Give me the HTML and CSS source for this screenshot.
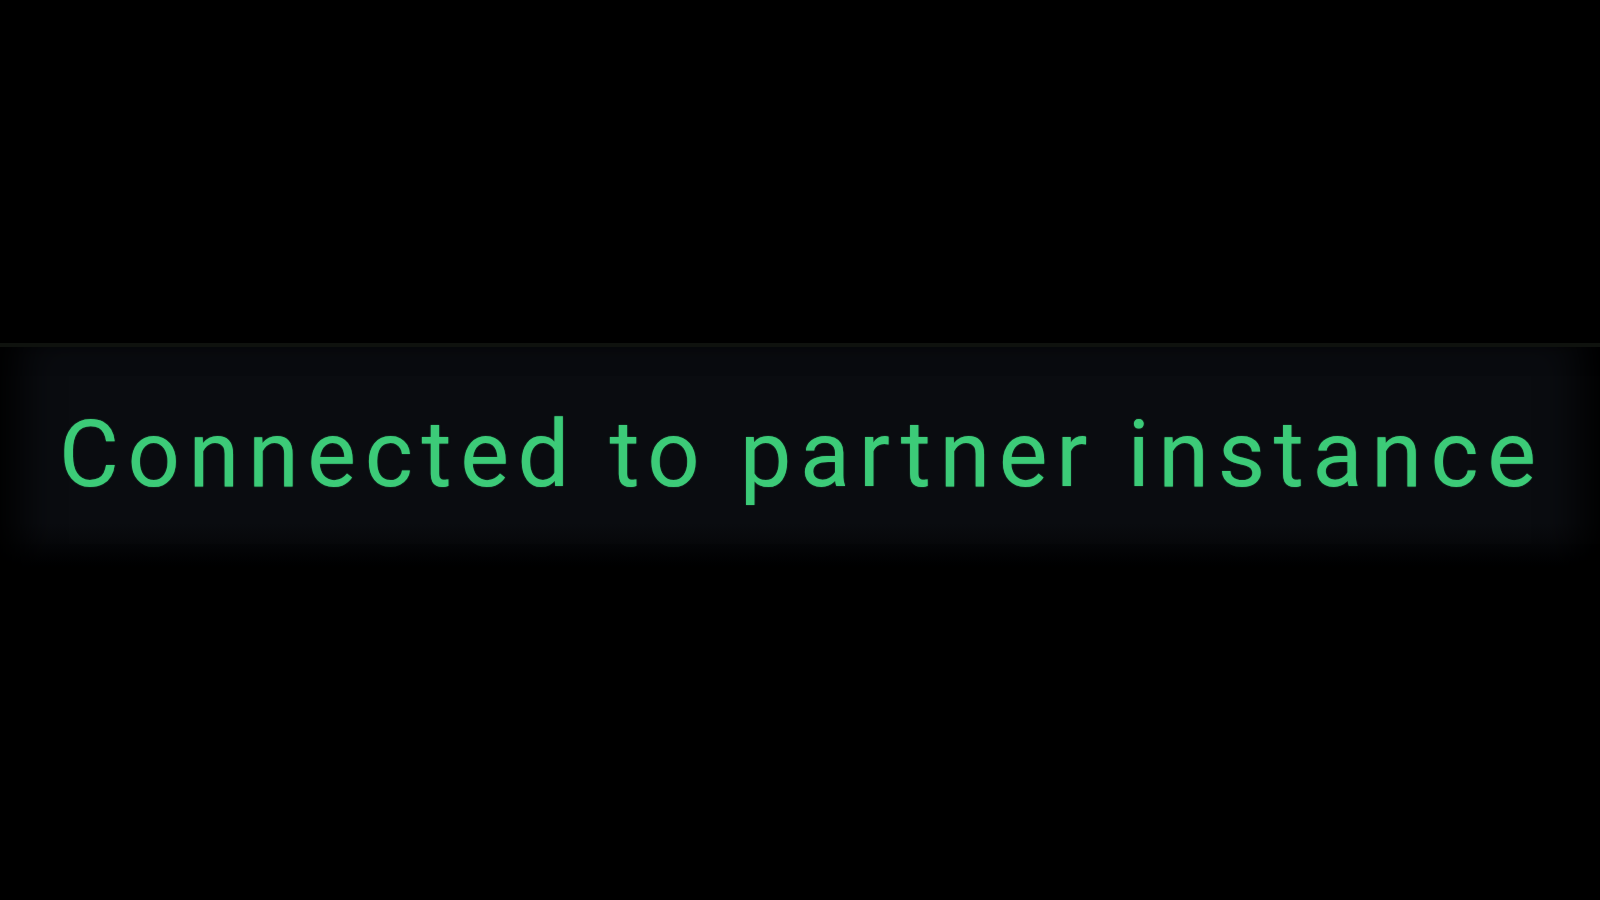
FILE: index.html
```html
<!DOCTYPE html>
<html>
<head>
<meta charset="utf-8">
<link rel="stylesheet" href="styles.css">
</head>
<body>
<div class="stage">
  <div class="toast">
    <span class="msg">Connected to partner instance</span>
  </div>
</div>
</body>
</html>
```
FILE: styles.css
```css
html, body {
  margin: 0;
  padding: 0;
  background: #000;
}
.stage {
  width: 1600px;
  height: 900px;
  padding-top: 343px;
  box-sizing: border-box;
}
.toast {
  height: 230px;
  border-top: 4px solid #0f120e;
  background: linear-gradient(to bottom, #0a0c10 0%, #0a0c10 78%, #050608 90%, #000 100%);
  box-shadow: inset 40px 0 40px -20px #000, inset -40px 0 40px -20px #000;
  display: flex;
  align-items: flex-start;
  padding: 62px 0 0 59px;
  box-sizing: border-box;
}
.msg {
  font-family: Roboto, "Liberation Sans", sans-serif;
  font-size: 92px;
  line-height: 1;
  color: #3ccb78;
  letter-spacing: 8.6px;
  white-space: nowrap;
  text-shadow: 0 0 1.5px rgba(60, 203, 120, 0.6);
}
```
